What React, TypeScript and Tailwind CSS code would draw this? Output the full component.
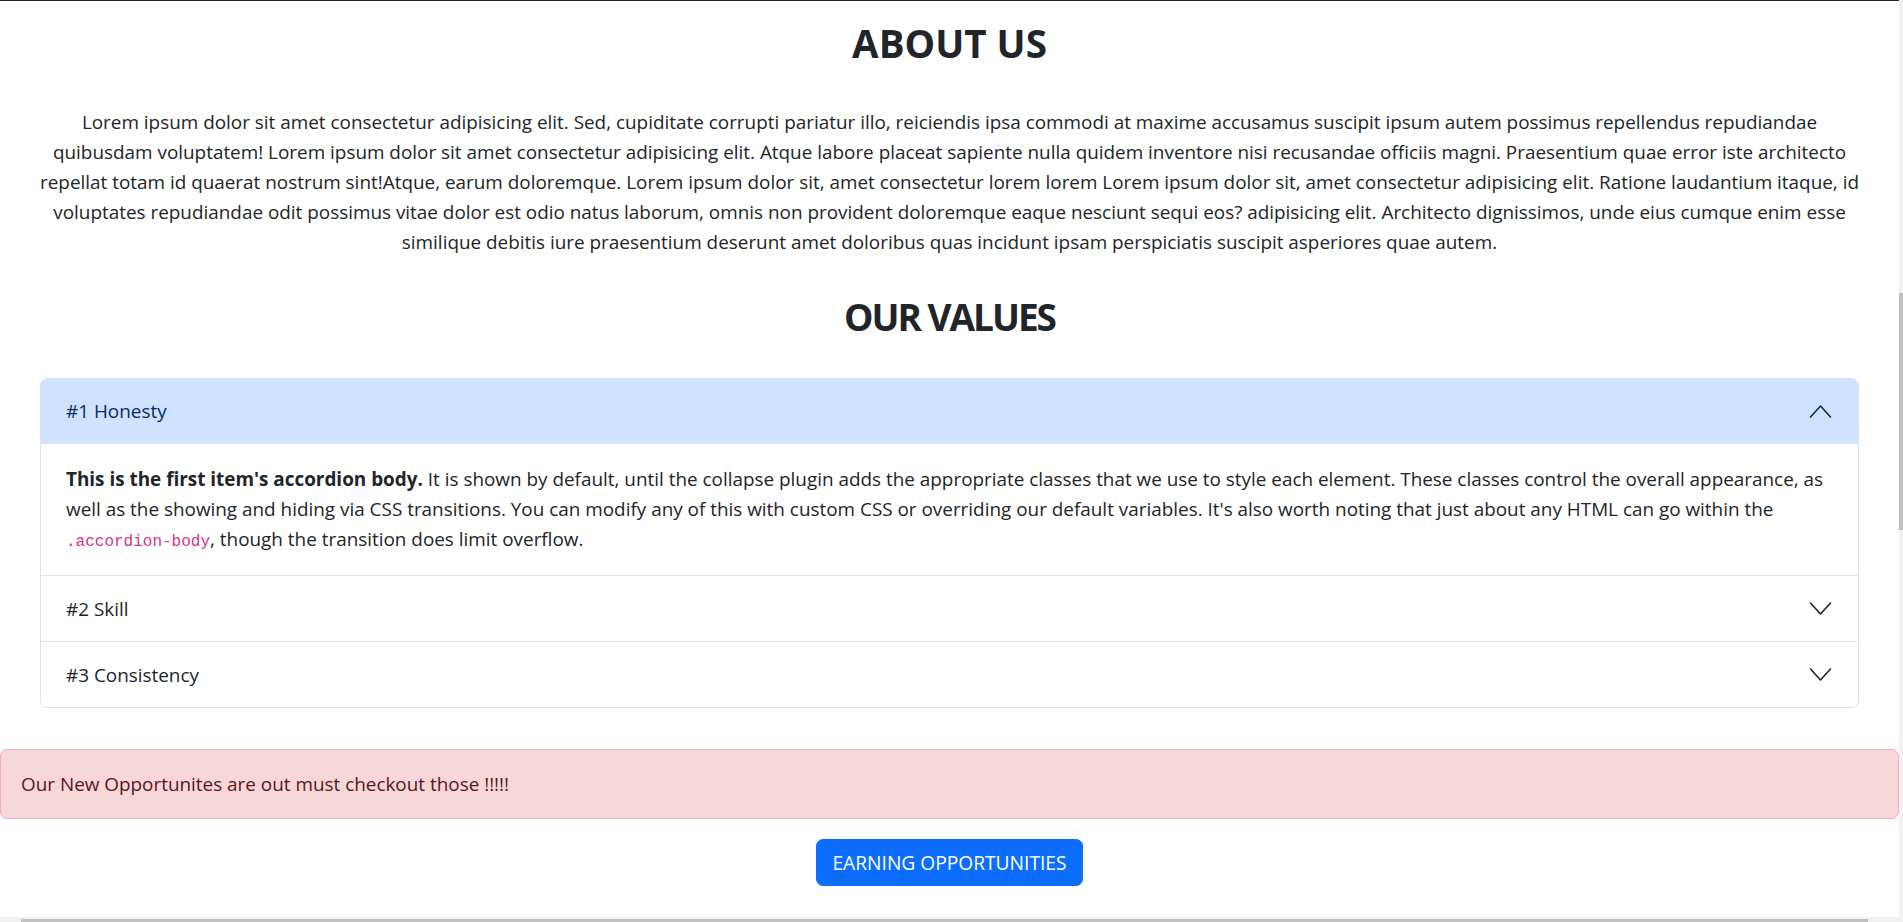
import React from "react";

function Chevron({ up, color }: { up?: boolean; color: string }) {
  return (
    <svg width="25" height="25" viewBox="0 0 25 25" className="shrink-0">
      <path
        d={up ? "M2.5 18L12.5 7L22.5 18" : "M2.5 7L12.5 18L22.5 7"}
        fill="none"
        stroke={color}
        strokeWidth="1.6"
        strokeLinecap="round"
        strokeLinejoin="round"
      />
    </svg>
  );
}

const paraLines = [
  "Lorem ipsum dolor sit amet consectetur adipisicing elit. Sed, cupiditate corrupti pariatur illo, reiciendis ipsa commodi at maxime accusamus suscipit ipsum autem possimus repellendus repudiandae",
  "quibusdam voluptatem! Lorem ipsum dolor sit amet consectetur adipisicing elit. Atque labore placeat sapiente nulla quidem inventore nisi recusandae officiis magni. Praesentium quae error iste architecto",
  "repellat totam id quaerat nostrum sint!Atque, earum doloremque. Lorem ipsum dolor sit, amet consectetur lorem lorem Lorem ipsum dolor sit, amet consectetur adipisicing elit. Ratione laudantium itaque, id",
  "voluptates repudiandae odit possimus vitae dolor est odio natus laborum, omnis non provident doloremque eaque nesciunt sequi eos? adipisicing elit. Architecto dignissimos, unde eius cumque enim esse",
  "similique debitis iure praesentium deserunt amet doloribus quas incidunt ipsam perspiciatis suscipit asperiores quae autem.",
];

export default function App() {
  return (
    <div className="w-[1903px] h-[922px] overflow-hidden bg-white flex flex-col font-['Open_Sans',sans-serif] text-[#212529]">
      <div className="flex h-[917px]">
        {/* page content */}
        <div className="flex-1 flex flex-col min-w-0">
          <div className="h-[1px] bg-[#262626]" />
          <h1 className="mt-[18px] h-[48px] leading-[48px] text-center text-[38.5px] font-bold">ABOUT US</h1>

          <div className="mx-[40px] mt-[40px] text-center text-[18.9px] leading-[30px]">
            {paraLines.map((l, i) => (
              <div key={i} className="whitespace-nowrap">{l}</div>
            ))}
          </div>

          <h2 className="mt-[36px] h-[48px] leading-[48px] text-center text-[37px] tracking-[-2px] font-bold">OUR VALUES</h2>

          <div className="mx-[40px] mt-[37px] border border-[#dee2e6] rounded-[7px] overflow-hidden text-[18.9px] leading-[30px]">
            {/* item 1 */}
            <div className="border-b border-[#dee2e6]">
              <div className="h-[65px] flex items-center justify-between pl-[25px] pr-[25px] bg-[#cfe2ff] text-[#052c65] border-b border-[#dee2e6]">
                <span>#1 Honesty</span>
                <Chevron up color="#052c65" />
              </div>
              <div className="px-[25px] pt-[20px] pb-[18px]">
                <div className="whitespace-nowrap">
                  <strong className="font-bold">This is the first item's accordion body.</strong> It is shown by default, until the collapse plugin adds the appropriate classes that we use to style each element. These classes control the overall appearance, as
                </div>
                <div className="whitespace-nowrap">
                  well as the showing and hiding via CSS transitions. You can modify any of this with custom CSS or overriding our default variables. It's also worth noting that just about any HTML can go within the
                </div>
                <div className="whitespace-nowrap">
                  <code className="font-['Liberation_Mono',monospace] text-[16px] text-[#d63384]">.accordion-body</code>, though the transition does limit overflow.
                </div>
              </div>
            </div>
            {/* item 2 */}
            <div className="border-b border-[#dee2e6]">
              <div className="h-[65px] flex items-center justify-between pl-[25px] pr-[25px]">
                <span>#2 Skill</span>
                <Chevron color="#212529" />
              </div>
            </div>
            {/* item 3 */}
            <div>
              <div className="h-[65px] flex items-center justify-between pl-[25px] pr-[25px]">
                <span>#3 Consistency</span>
                <Chevron color="#212529" />
              </div>
            </div>
          </div>

          <div className="mt-[41px] border border-[#f1aeb5] bg-[#f8d7da] text-[#58151c] rounded-[7px] px-[20px] py-[19px] text-[18.9px] leading-[30px]">
            Our New Opportunites are out must checkout those !!!!!
          </div>

          <div className="mt-[20px] flex justify-center">
            <button className="bg-[#0d6efd] border border-[#0d6efd] text-white rounded-[7px] px-[15px] py-[7.5px] text-[19.2px] leading-[30px]">
              EARNING OPPORTUNITIES
            </button>
          </div>
        </div>

        {/* vertical scrollbar */}
        <div className="w-[4px] bg-[#f1f1f1] flex flex-col">
          <div className="h-[293px]" />
          <div className="h-[237px] bg-[#c1c1c1]" />
        </div>
      </div>

      {/* horizontal scrollbar */}
      <div className="h-[5px] bg-[#f1f1f1] flex">
        <div className="ml-[21px] w-[1847px] mt-[2px] h-[3px] bg-[#c1c1c1]" />
      </div>
    </div>
  );
}
